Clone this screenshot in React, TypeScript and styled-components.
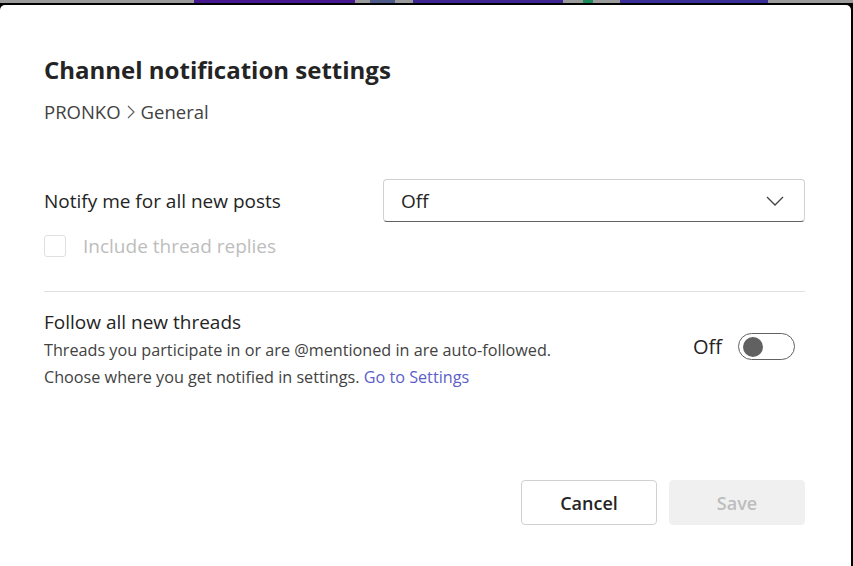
import styled, { createGlobalStyle } from "styled-components";

const GlobalStyle = createGlobalStyle`
  html, body {
    margin: 0;
    padding: 0;
    background: #000;
    overflow: hidden;
  }
  body {
    font-family: "Open Sans", "Noto Sans", sans-serif;
    color: #242424;
  }
`;

const AppStrip = styled.div`
  display: flex;
  height: 3px;
  background: #9b9b9b;
`;

const StripBlock = styled.div<{ $w: number; $c: string }>`
  width: ${(p) => p.$w}px;
  flex-shrink: 0;
  background: ${(p) => p.$c};
`;

const Dialog = styled.div`
  margin-top: 2px;
  width: 851px;
  min-height: 561px;
  box-sizing: border-box;
  background: #fff;
  border-radius: 5px 5px 0 0;
  padding: 50px 46px 0 44px;
`;

const Title = styled.h1`
  margin: 0;
  font-size: 24px;
  line-height: 30px;
  font-weight: 700;
  color: #242424;
`;

const Breadcrumb = styled.div`
  margin-top: 14px;
  display: flex;
  align-items: center;
  gap: 6px;
  font-size: 18.5px;
  line-height: 26px;
  color: #424242;
`;

const FieldRow = styled.div`
  margin-top: 54px;
  display: flex;
  align-items: center;
  justify-content: space-between;
`;

const Label = styled.span`
  font-size: 19px;
  line-height: 26px;
  color: #242424;
`;

const Dropdown = styled.button`
  width: 422px;
  height: 43px;
  box-sizing: border-box;
  display: flex;
  align-items: center;
  justify-content: space-between;
  padding: 0 20px 0 17px;
  background: #fff;
  border: 1px solid #d1d1d1;
  border-bottom-color: #616161;
  border-radius: 4px;
  font-family: inherit;
  font-size: 19px;
  color: #242424;
`;

const CheckRow = styled.label`
  margin-top: 13px;
  display: flex;
  align-items: center;
  gap: 17px;
  font-size: 19px;
  line-height: 22px;
  color: #bdbdbd;
`;

const Box = styled.span`
  width: 22px;
  height: 22px;
  box-sizing: border-box;
  border: 1px solid #e0e0e0;
  border-radius: 3px;
`;

const Divider = styled.hr`
  margin: 34px 0 0;
  border: none;
  border-top: 1px solid #e0e0e0;
`;

const FollowRow = styled.div`
  margin-top: 17px;
  display: flex;
  align-items: flex-start;
  justify-content: space-between;
`;

const FollowText = styled.div`
  display: flex;
  flex-direction: column;
`;

const Description = styled.p`
  margin: 2px 0 0;
  font-size: 16.2px;
  line-height: 27px;
  color: #424242;
`;

const LinkText = styled.a`
  color: #5b5fc7;
  text-decoration: none;
`;

const ToggleWrap = styled.div`
  margin-top: 24px;
  margin-right: 10px;
  display: flex;
  align-items: center;
  gap: 16px;
  font-size: 20px;
  color: #242424;
`;

const Switch = styled.span<{ $on: boolean }>`
  width: 57px;
  height: 27px;
  box-sizing: border-box;
  border: 1px solid #616161;
  border-radius: 14px;
  display: flex;
  align-items: center;
  justify-content: ${(p) => (p.$on ? "flex-end" : "flex-start")};
  padding: 0 4px;
`;

const Knob = styled.span`
  width: 20px;
  height: 20px;
  border-radius: 50%;
  background: #616161;
`;

const Footer = styled.div`
  margin-top: 89px;
  display: flex;
  justify-content: flex-end;
  gap: 12px;
`;

const Button = styled.button<{ $disabled?: boolean }>`
  width: 136px;
  height: 45px;
  box-sizing: border-box;
  border-radius: 4px;
  font-family: inherit;
  font-size: 18px;
  font-weight: 600;
  border: 1px solid ${(p) => (p.$disabled ? "#f0f0f0" : "#d1d1d1")};
  background: ${(p) => (p.$disabled ? "#f0f0f0" : "#fff")};
  color: ${(p) => (p.$disabled ? "#bdbdbd" : "#242424")};
`;

const strip = [
  { w: 194, c: "#9b9b9b" },
  { w: 161, c: "#46178f" },
  { w: 15, c: "#9b9b9b" },
  { w: 25, c: "#4d5a88" },
  { w: 18, c: "#9b9b9b" },
  { w: 150, c: "#3e2591" },
  { w: 20, c: "#9b9b9b" },
  { w: 10, c: "#1b8a5a" },
  { w: 27, c: "#9b9b9b" },
  { w: 148, c: "#3a2f96" },
];

function ChevronRight() {
  return (
    <svg width="8" height="14" viewBox="0 0 8 14" fill="none">
      <path d="M1 1l6 6-6 6" stroke="#616161" strokeWidth="1.2" />
    </svg>
  );
}

function ChevronDown() {
  return (
    <svg width="18" height="10" viewBox="0 0 18 10" fill="none">
      <path d="M1 1l8 8 8-8" stroke="#424242" strokeWidth="1.3" />
    </svg>
  );
}

export default function App() {
  return (
    <>
      <GlobalStyle />
      <AppStrip>
        {strip.map((s, i) => (
          <StripBlock key={i} $w={s.w} $c={s.c} />
        ))}
      </AppStrip>
      <Dialog>
        <Title>Channel notification settings</Title>
        <Breadcrumb>
          <span>PRONKO</span>
          <ChevronRight />
          <span>General</span>
        </Breadcrumb>
        <FieldRow>
          <Label>Notify me for all new posts</Label>
          <Dropdown>
            <span>Off</span>
            <ChevronDown />
          </Dropdown>
        </FieldRow>
        <CheckRow>
          <Box />
          <span>Include thread replies</span>
        </CheckRow>
        <Divider />
        <FollowRow>
          <FollowText>
            <Label>Follow all new threads</Label>
            <Description>
              Threads you participate in or are @mentioned in are auto-followed.
              <br />
              Choose where you get notified in settings.{" "}
              <LinkText href="#">Go to Settings</LinkText>
            </Description>
          </FollowText>
          <ToggleWrap>
            <span>Off</span>
            <Switch $on={false}>
              <Knob />
            </Switch>
          </ToggleWrap>
        </FollowRow>
        <Footer>
          <Button>Cancel</Button>
          <Button $disabled>Save</Button>
        </Footer>
      </Dialog>
    </>
  );
}
